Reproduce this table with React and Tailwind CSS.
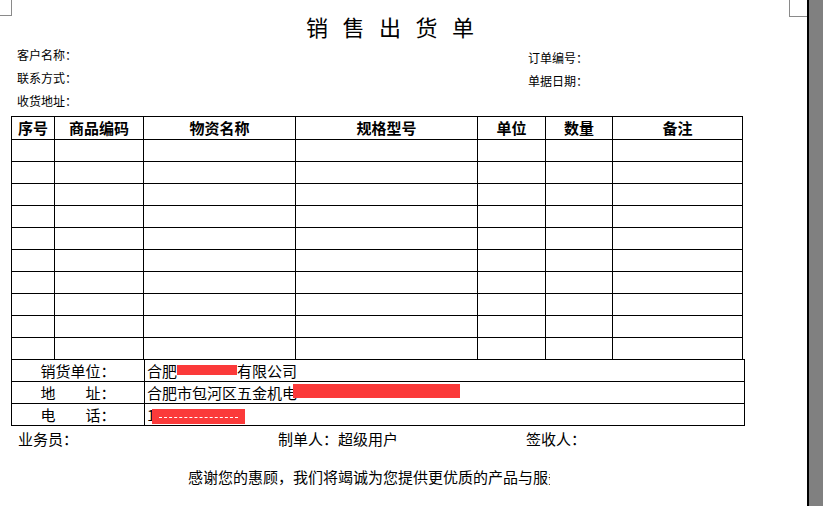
import React from "react";

const headers = ["序号", "商品编码", "物资名称", "规格型号", "单位", "数量", "备注"];
const colWidths = ["w-[43px]", "w-[89px]", "w-[152px]", "w-[182px]", "w-[68px]", "w-[67px]", "w-[130px]"];
const rows = Array.from({ length: 10 });

export default function App() {
  return (
    <div
      className="flex w-[823px] h-[506px] overflow-hidden bg-white text-black"
      style={{ fontFamily: '"Noto Sans CJK SC", "Noto Sans", sans-serif' }}
    >
      {/* page */}
      <div className="relative w-[807px] h-full">
        {/* corner marks */}
        <div className="absolute left-0 top-0 w-[12px] h-[16px] border-r border-b border-[#8a8a8a]" />
        <div className="absolute left-[789px] top-0 w-[18px] h-[17px] border-l border-b border-[#8a8a8a]" />

        {/* title */}
        <div className="pt-[13px] pl-[306px] h-[43px]">
          <h1 className="text-[22px] leading-[26px] tracking-[14.5px] whitespace-nowrap">销售出货单</h1>
        </div>

        {/* customer info */}
        <div className="flex text-[12px] h-[73px]">
          <div className="w-[528px] pl-[17px] leading-[23px]">
            <div>客户名称：</div>
            <div>联系方式：</div>
            <div>收货地址：</div>
          </div>
          <div className="pt-[3px] leading-[23px]">
            <div>订单编号：</div>
            <div>单据日期：</div>
          </div>
        </div>

        {/* goods table */}
        <table className="ml-[11px] border-collapse table-fixed w-[732px]">
          <colgroup>
            {colWidths.map((w, i) => (
              <col key={i} className={w} />
            ))}
          </colgroup>
          <thead>
            <tr className="h-[23px]">
              {headers.map((h) => (
                <th key={h} className="border border-black p-0 text-[15px] leading-[18px] font-bold text-center">
                  {h}
                </th>
              ))}
            </tr>
          </thead>
          <tbody>
            {rows.map((_, r) => (
              <tr key={r} className="h-[22px]">
                {headers.map((h) => (
                  <td key={h} className="border border-black p-0" />
                ))}
              </tr>
            ))}
          </tbody>
        </table>

        {/* seller info */}
        <table className="ml-[11px] border-collapse table-fixed w-[733px] -mt-px text-[15px] leading-[18px]">
          <colgroup>
            <col className="w-[133px]" />
            <col className="w-[600px]" />
          </colgroup>
          <tbody>
            <tr className="h-[22px]">
              <td className="border border-black p-0 text-center">销货单位：</td>
              <td className="border border-black p-0 pl-[2px] relative whitespace-nowrap">
                合肥　　　　有限公司
                <span className="absolute left-[32px] top-[5px] w-[60px] h-[10px] bg-[#fb3a3a]" />
              </td>
            </tr>
            <tr className="h-[22px]">
              <td className="border border-black p-0 text-center">地　　址：</td>
              <td className="border border-black p-0 pl-[2px] relative whitespace-nowrap">
                合肥市包河区五金机电
                <span className="absolute left-[148px] top-[2px] w-[167px] h-[14px] bg-[#fb3a3a]" />
              </td>
            </tr>
            <tr className="h-[22px]">
              <td className="border border-black p-0 text-center">电　　话：</td>
              <td className="border border-black p-0 pl-[2px] relative whitespace-nowrap">
                1
                <span className="absolute left-[7px] top-[5px] w-[93px] h-[15px] bg-[#fb3a3a]">
                  <span className="absolute left-[7px] top-[8px] w-[79px] border-t border-dashed border-white" />
                </span>
              </td>
            </tr>
          </tbody>
        </table>

        {/* signatures */}
        <div className="flex text-[15px] leading-[18px] mt-[4px] whitespace-nowrap">
          <div className="w-[278px] pl-[18px]">业务员：</div>
          <div className="w-[248px]">制单人：超级用户</div>
          <div>签收人：</div>
        </div>

        {/* thanks */}
        <div className="mt-[20px] ml-[188px] w-[362px] overflow-hidden whitespace-nowrap text-[15px] leading-[18px]">
          感谢您的惠顾，我们将竭诚为您提供更优质的产品与服务！
        </div>
      </div>

      {/* scrollbar edge */}
      <div className="w-[2px] h-full bg-black" />
      <div className="flex-1 h-full bg-[#808080]" />
    </div>
  );
}
